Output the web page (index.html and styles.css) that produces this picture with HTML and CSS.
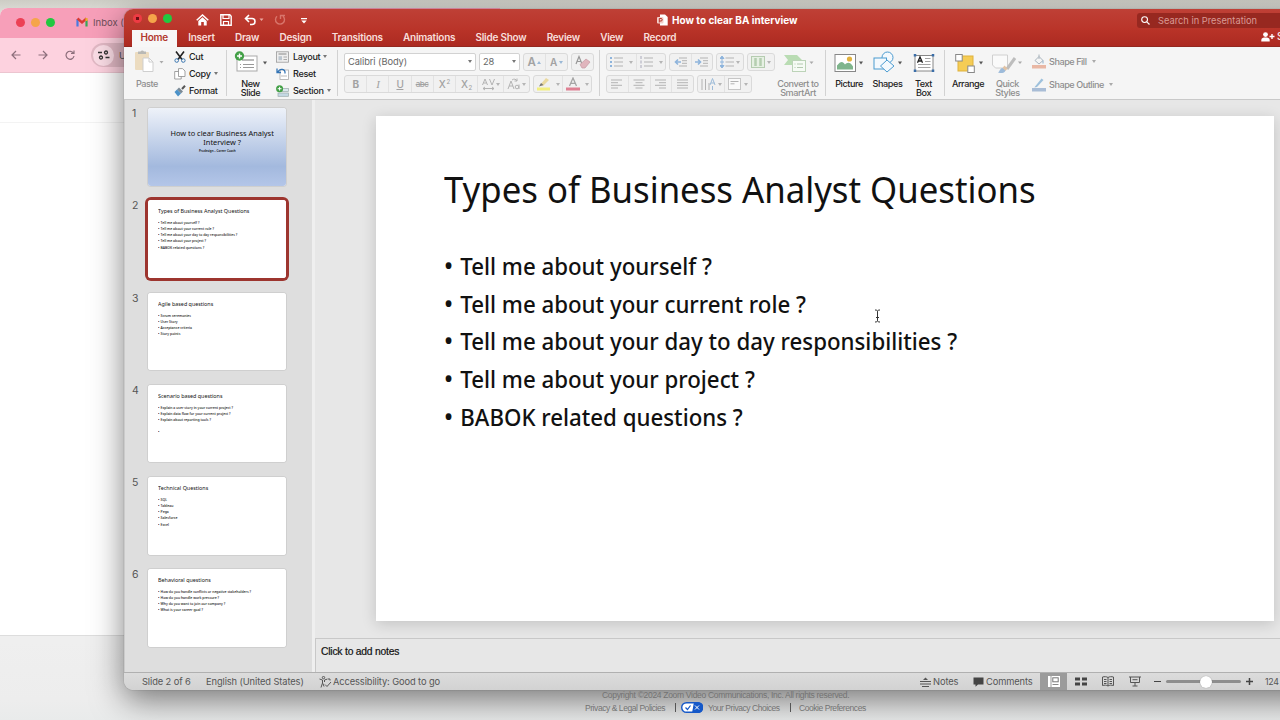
FILE: index.html
```html
<!DOCTYPE html>
<html lang="en">
<head>
    <meta charset="UTF-8">
    <meta name="viewport" content="width=device-width, initial-scale=1.0">
    <title>How to clear BA interview</title>
    <link rel="stylesheet" href="styles.css">
</head>
<body>
<div class="desktop">

  <!-- Zoom page footer -->
  <div class="zoom-footer">
    <p>Copyright ©2024 Zoom Video Communications, Inc. All rights reserved.</p>
    <div class="zoom-links">
      <span class="zl1">Privacy &amp; Legal Policies</span><i class="bar"></i>
      <svg width="22" height="11" viewBox="0 0 22 11"><rect x=".7" y=".7" width="20.6" height="9.6" rx="4.8" fill="#fff" stroke="#1558c8" stroke-width="1.4"/><path d="M13 0h4a5.500 5.500 0 0 1 0 11h-6z" fill="#1558c8"/><path d="M4.500 5.500l2 2 3-4" fill="none" stroke="#1558c8" stroke-width="1.200"/><path d="M14 3.500l4 4m0-4l-4 4" stroke="#fff"/></svg>
      <span class="zl2">Your Privacy Choices</span><i class="bar"></i>
      <span class="zl3">Cookie Preferences</span>
    </div>
  </div>

  <!-- Browser window -->
  <div class="browser">
    <div class="browser-tabs">
      <i class="dot red"></i><i class="dot yellow"></i><i class="dot green"></i>
      <svg class="gmail" width="12" height="10" viewBox="0 0 12 10"><path d="M1.500 9.500V2" stroke="#4a7be0" stroke-width="2.200"/><path d="M10.500 9.500V3" stroke="#3aa757" stroke-width="2.200"/><path d="M1.500 1.500L6 5.500l4.500-4" fill="none" stroke="#d93a35" stroke-width="2.400"/><path d="M10.500 4V1" stroke="#e8b030" stroke-width="2.200"/></svg>
      <span>Inbox (</span>
    </div>
    <div class="browser-bar">
      <svg width="10" height="10" viewBox="0 0 10 10" class="nav"><path d="M9.500 5H1M5 1L1 5l4 4"/></svg>
      <svg width="10" height="10" viewBox="0 0 10 10" class="nav"><path d="M.5 5H9M5 1l4 4-4 4"/></svg>
      <svg width="10" height="10" viewBox="0 0 10 10" class="nav"><path d="M8.500 3.200A4 4 0 1 0 9 6M9 .5v3H6"/></svg>
      <div class="url"><b><svg width="12" height="10" viewBox="0 0 12 10" class="tune"><path d="M0 2.500h4M7.500 7.500h4"/><circle cx="8" cy="2.500" r="1.500"/><circle cx="3" cy="7.500" r="1.500"/></svg></b><span>U</span></div>
    </div>
    <div class="browser-page"><div class="page-head"></div></div>
  </div>

  <!-- PowerPoint window -->
  <div class="ppt">
    <header class="titlebar">
      <div class="quick">
        <i class="dot red close"></i><i class="dot yellow"></i><i class="dot green"></i>
        <svg class="q-home" width="13" height="12" viewBox="0 0 13 12"><path d="M.7 6.300L6.500 1l5.800 5.300" fill="none" stroke="#fff" stroke-width="1.500"/><path d="M2.300 7L6.500 3.300 10.700 7v4.500H7.800V8H5.200v3.500H2.300z" fill="#fff"/></svg>
        <svg class="q-save" width="12" height="12" viewBox="0 0 12 12"><path d="M.8.8h9l1.400 1.400v9H.8z" fill="none" stroke="#fff" stroke-width="1.400"/><path d="M3 1v3.500h6V1M3.500 11V7.500h5V11" fill="none" stroke="#fff" stroke-width="1.200"/></svg>
        <svg class="q-undo" width="20" height="12" viewBox="0 0 20 12"><path d="M5 1L1.500 4.500 5 8M2 4.500h6a3 3 0 0 1 0 6H6" fill="none" stroke="#fff" stroke-width="1.600"/><path d="M15.500 4.500h4l-2 2.500z" fill="#eba8a0"/></svg>
        <svg class="q-redo" width="12" height="12" viewBox="0 0 12 12"><path d="M3 2.300a4.500 4.500 0 1 0 6 0M6.500 5V1.500H11" fill="none" stroke="#d8756b" stroke-width="1.400"/></svg>
        <svg class="q-more" width="6" height="6" viewBox="0 0 6 6"><path d="M0 .6h6" stroke="#fff" stroke-width="1.200"/><path d="M.3 2.500h5.400L3 5.500z" fill="#fff"/></svg>
      </div>
      <div class="doc-title">
        <svg width="11" height="12" viewBox="0 0 11 12"><path d="M3 .5h5L10.700 3v8.500H3z" fill="#fff"/><rect y="3" width="6.500" height="6.500" rx="1" fill="#f3d0cb"/><path d="M2.300 8.500v-4H4a1.200 1.200 0 0 1 0 2.500H2.500" stroke="#b7372c" fill="none"/></svg>
        <span>How to clear BA interview</span>
      </div>
      <div class="search">
        <svg width="9" height="9" viewBox="0 0 9 9"><circle cx="3.600" cy="3.600" r="2.900" fill="none" stroke="#fff" stroke-width="1.100"/><path d="M5.800 5.800L8.500 8.500" stroke="#fff" stroke-width="1.200"/></svg>
        <span>Search in Presentation</span>
      </div>
    </header>
    <nav class="tabs">
      <span class="tab active">Home</span><span class="tab">Insert</span><span class="tab">Draw</span><span class="tab">Design</span><span class="tab">Transitions</span><span class="tab">Animations</span><span class="tab">Slide Show</span><span class="tab">Review</span><span class="tab">View</span><span class="tab">Record</span>
      <div class="share"><svg width="14" height="10" viewBox="0 0 14 10"><circle cx="4.500" cy="2.600" r="2.400" fill="#fff"/><path d="M.3 9.500V8c0-2 2-2.500 4.200-2.500S8.700 6 8.700 8v1.500z" fill="#fff"/><path d="M8.500 4.500h5M11 2v5" stroke="#fff" stroke-width="1.400"/></svg><span>Share</span></div>
    </nav>

    <div class="ribbon">
      <div class="big off w-paste">
        <svg width="30" height="26" viewBox="0 0 30 26"><rect x="1" y="5" width="14" height="18" rx="1" fill="#ecdcc0"/><path d="M4 7V4.500h2.500a2 2 0 0 1 3.500 0H12V7z" fill="#b9b9b5"/><path d="M9 11h6l4 4v9.500H9z" fill="#fff" stroke="#cfcfcf"/><path d="M15 11v4h4" fill="none" stroke="#cfcfcf"/><path d="M25.500 14h4l-2 2.500z" fill="#aaa"/></svg>
        <span>Paste</span>
      </div>
      <div class="stack w-clip">
        <div><svg width="12" height="12" viewBox="0 0 12 12"><path d="M2 .5l6 8M10 .5l-6 8" stroke="#222" stroke-width="1.600"/><circle cx="2.700" cy="9.500" r="1.800" fill="none" stroke="#3c77b0"/><circle cx="9.300" cy="9.500" r="1.800" fill="none" stroke="#3c77b0"/></svg><span>Cut</span></div>
        <div><svg width="12" height="12" viewBox="0 0 12 12"><path d="M.7 3.500h5l1.500 1.500v6H.7z" fill="#fff" stroke="#8b8b8b" stroke-width=".8"/><path d="M4.500.6h4L11 3v5.500H4.500z" fill="#fff" stroke="#8b8b8b" stroke-width=".8"/></svg><span>Copy</span><em class="caret cc"></em></div>
        <div><svg width="12" height="12" viewBox="0 0 12 12"><path d="M11 .8L8 4" stroke="#555" stroke-width="2"/><path d="M5 2.500l4 4-2 2-4-4z" fill="#7c8b96"/><path d="M3 4.500l4 4-3 3L.5 7z" fill="#4c92c8"/></svg><span>Format</span></div>
      </div>
      <i class="sep"></i>
      <div class="big w-new">
        <svg width="34" height="26" viewBox="0 0 34 26"><rect x="3" y="9" width="20" height="15" fill="#fff" stroke="#a9a9a9"/><path d="M8 13h12" stroke="#bbb" stroke-width="2"/><path d="M6 17.500h1m2 0h11M6 20.500h1m2 0h11" stroke="#999"/><circle cx="5.500" cy="9" r="4.700" fill="#43a047"/><path d="M3 9h5M5.500 6.500v5" stroke="#fff" stroke-width="1.400"/><path d="M29 14.500h4l-2 3z" fill="#555"/></svg>
        <span>New<br>Slide</span>
      </div>
      <div class="stack w-lay">
        <div><svg width="13" height="12" viewBox="0 0 13 12"><rect x=".5" y=".8" width="12" height="10.400" fill="#eee" stroke="#9a9a9a" stroke-width=".8"/><path d="M2.500 3h8" stroke="#888"/><rect x="2.500" y="5.200" width="3.500" height="4" fill="#bcc6cf"/><path d="M7.500 6h3.500M7.500 8.500h3.500" stroke="#999" stroke-width=".8"/></svg><span>Layout</span><em class="caret cl"></em></div>
        <div><svg width="13" height="12" viewBox="0 0 13 12"><rect x="4" y="2" width="8.500" height="9.500" fill="#fff" stroke="#aaa" stroke-width=".8"/><path d="M1 .5v4h4M1.500 4.500C4-.5 9.500 1 9 5.500" fill="none" stroke="#3374b5" stroke-width="1.300"/><path d="M5 8h6" stroke="#bbb"/></svg><span>Reset</span></div>
        <div><svg width="13" height="12" viewBox="0 0 13 12"><rect x="3" y="3.500" width="9.500" height="3" fill="#dbe8ee" stroke="#9aa" stroke-width=".7"/><rect x="2" y="8" width="10.500" height="3.300" fill="#c5d9e4" stroke="#9aa" stroke-width=".7"/><circle cx="3.600" cy="3.700" r="3.500" fill="#43a047"/><path d="M1.700 3.700h3.800M3.600 1.800v3.800" stroke="#fff"/></svg><span>Section</span><em class="caret cs"></em></div>
      </div>
      <i class="sep"></i>

      <div class="rows w-font">
        <div class="row">
          <div class="combo c1"><span>Calibri (Body)</span><em class="caret"></em></div>
          <div class="combo c2"><span>28</span><em class="caret"></em></div>
          <div class="btns ab"><b class="fa">A<em class="up"></em></b><b class="fb">A<em class="caret blue"></em></b></div>
          <div class="btns er"><b><svg width="16" height="14" viewBox="0 0 16 14"><path d="M1 9L4 1.500 7 9M2 6.500h4" fill="none" stroke="#999" stroke-width="1.200"/><path d="M5 9.500L11 4l4 3-5 6H7z" fill="#e0b5bd" stroke="#c59aa3" stroke-width=".7"/></svg></b></div>
        </div>
        <div class="row">
          <div class="btns fmt"><b class="heavy">B</b><b class="ital">I</b><b class="und">U</b><b class="strike">abc</b><b>X<sup>2</sup></b><b>X<sub>2</sub></b><b class="wide av"><svg width="13" height="13" viewBox="0 0 13 13"><path d="M.5 7L3 1l2.500 6M1.500 5h3M7.500 1L10 7l2.500-6M1 10.500h11M3 9l-2 1.500L3 12M10 9l2 1.500-2 1.500" class="g"/></svg><em class="caret"></em></b><b class="wide"><svg width="14" height="12" viewBox="0 0 14 12"><path d="M1 11l3-8 3 8M2 8h4" class="g"/><circle cx="10" cy="9" r="1.800" class="g"/><path d="M12 6.500V11M5 2c2-1.500 4-1 5 1M10 .5V3H7.500" class="g"/></svg><em class="caret"></em></b></div>
          <div class="btns hl"><b><svg width="14" height="14" viewBox="0 0 14 14"><rect x="0" y="10.500" width="13" height="3" fill="#f3ef7f"/><path d="M3 8l6-7 3 2-6 6z" fill="#ead9a0"/><path d="M2 9.500L4 6l2.500 2z" fill="#777"/></svg></b><b class="sm"><em class="caret"></em></b><b><svg width="14" height="14" viewBox="0 0 14 14"><path d="M3.500 9L7 1l3.500 8M4.600 6.300h4.800" fill="none" stroke="#a5a5a5" stroke-width="1.300"/><rect x="0" y="10.500" width="14" height="3" fill="#df8093"/></svg></b><b class="sm"><em class="caret"></em></b></div>
        </div>
      </div>
      <i class="sep"></i>

      <div class="rows w-para">
        <div class="row">
          <div class="btns p1"><b><svg width="13" height="12" viewBox="0 0 13 12"><path d="M0 2h2M0 6h2M0 10h2" stroke="#8eb4dc" stroke-width="2"/><path d="M4 2h9M4 6h9M4 10h9" class="g"/></svg></b><b class="sm"><em class="caret"></em></b><b><svg width="13" height="12" viewBox="0 0 13 12"><path d="M1 0v3M1 4.500v3M1 9v3" stroke="#aab" /><path d="M4 2h9M4 6h9M4 10h9" class="g"/></svg></b><b class="sm"><em class="caret"></em></b></div>
          <div class="btns p2"><b><svg width="13" height="10" viewBox="0 0 13 10"><path d="M5 1h8M8 3.700h5M8 6.300h5M5 9h8" class="g"/><path d="M7 5H1.500M4 2.500L1.500 5 4 7.500" fill="none" stroke="#8eb4dc" stroke-width="1.600"/></svg></b><b><svg width="13" height="10" viewBox="0 0 13 10"><path d="M5 1h8M8 3.700h5M8 6.300h5M5 9h8" class="g"/><path d="M0 5h5.500M3 2.500L5.500 5 3 7.500" fill="none" stroke="#8eb4dc" stroke-width="1.600"/></svg></b></div>
          <div class="btns p3"><b><svg width="14" height="12" viewBox="0 0 14 12"><path d="M5.500 2H14M5.500 6H14M5.500 10H14" class="g"/><path d="M2 0l2 2.500H0zM2 12l2-2.500H0zM2 2v8M0 6h4" fill="#8eb4dc" stroke="#8eb4dc"/></svg><em class="caret"></em></b></div>
          <div class="btns p3"><b><svg width="14" height="12" viewBox="0 0 14 12"><rect x=".5" y=".5" width="13" height="11" fill="#e6f0e3" stroke="#b5ccb0"/><path d="M4.500 2v8M9.500 2v8" stroke="#b5ceb0" stroke-width="2.500"/></svg><em class="caret"></em></b></div>
        </div>
        <div class="row">
          <div class="btns p4"><b><svg width="12" height="10" viewBox="0 0 12 10"><path d="M0 1h11M0 3.700h7M0 6.300h11M0 9h7" class="g"/></svg></b><b><svg width="12" height="10" viewBox="0 0 12 10"><path d="M.5 1h11M2.500 3.700h7M.5 6.300h11M2.500 9h7" class="g"/></svg></b><b><svg width="12" height="10" viewBox="0 0 12 10"><path d="M0 1h11M4 3.700h7M0 6.300h11M4 9h7" class="g"/></svg></b><b><svg width="12" height="10" viewBox="0 0 12 10"><path d="M0 1h11M0 3.700h11M0 6.300h11M0 9h11" class="g"/></svg></b></div>
          <div class="btns p5"><b><svg width="15" height="13" viewBox="0 0 15 13"><path d="M1 1v11M4.500 1v11M8 5v7" class="g"/><path d="M9 7l2.500-6.500L14 7M10 5h3.500M11.500 8v4" fill="none" stroke="#9dbbd8"/></svg><em class="caret"></em></b><b><svg width="14" height="12" viewBox="0 0 14 12"><rect x=".5" y=".5" width="12" height="11" fill="#fafafa" stroke="#c6c6c6"/><path d="M2.500 3.500h8M2.500 5.800h4" class="g"/></svg><em class="caret"></em></b></div>
        </div>
      </div>
      <div class="big off w-smart">
        <svg width="30" height="26" viewBox="0 0 30 26"><path d="M0 8h13l5 5-5 5H0l4-5z" fill="#b9dcb3"/><rect x="8.500" y="13.500" width="13" height="11" fill="#f6fbf5" stroke="#bcd3b8"/><path d="M10.500 17h1m1.500 0h6M10.500 20.500h1m1.500 0h6" stroke="#b4c9b0"/><path d="M25.500 14.500h4l-2 2.500z" fill="#aaa"/></svg>
        <span>Convert to<br>SmartArt</span>
      </div>
      <i class="sep"></i>
      <div class="big w-pic">
        <svg width="30" height="26" viewBox="0 0 30 26"><rect x="2" y="7.500" width="20.500" height="17" fill="#fff" stroke="#888"/><path d="M4 22.500v-4c4-5 6-4 8-1 2-2 5-3 8 2v3z" fill="#7fb58c"/><circle cx="16.500" cy="12" r="2.600" fill="#e2b23e"/><path d="M26 14.500h4l-2 3z" fill="#555"/></svg>
        <span>Picture</span>
      </div>
      <div class="big w-shape">
        <svg width="30" height="26" viewBox="0 0 30 26"><circle cx="15.500" cy="10.500" r="5.500" fill="#f4f9fd" stroke="#4b9bd0"/><rect x="2" y="11" width="12.500" height="11" fill="#f4f9fd" stroke="#4b9bd0"/><path d="M15 13l7 6-7 6-6.500-6z" fill="#f4f9fd" stroke="#4b9bd0"/><path d="M26 14.500h4l-2 3z" fill="#555"/></svg>
        <span>Shapes</span>
      </div>
      <div class="big w-text">
        <svg width="22" height="26" viewBox="0 0 22 26"><rect x="2" y="8.500" width="18" height="15.500" fill="#fff" stroke="#888"/><path d="M12 11.500h5.500M12 14.500h5.500M5 17.500h12.500M5 20.500h12.500" stroke="#999" stroke-width=".9"/><path d="M4.500 15.800L7 10l2.500 5.800M5.500 14h3" fill="none" stroke="#222" stroke-width="1.300"/><path d="M2 7v2.500M20 7v2.500M2 22.500V25M20 22.500V25" stroke="#3b6ea8" stroke-width="2.500"/></svg>
        <span>Text<br>Box</span>
      </div>
      <i class="sep"></i>
      <div class="big w-arr">
        <svg width="30" height="26" viewBox="0 0 30 26"><rect x="3" y="9" width="15" height="15" fill="#f5cc55" stroke="#dfb23c"/><rect x=".7" y="7.500" width="6.500" height="6.500" fill="#fff" stroke="#888"/><rect x="12.800" y="19" width="6.500" height="6.500" fill="#fff" stroke="#888"/><path d="M24 14.500h4l-2 3z" fill="#555"/></svg>
        <span>Arrange</span>
      </div>
      <div class="big off w-sty">
        <svg width="32" height="26" viewBox="0 0 32 26"><path d="M1.500 8h15v13h-12l-3-3z" fill="#fafafa" stroke="#d0d0d0"/><path d="M24 11l-8 11" stroke="#bdbdbd" stroke-width="3"/><path d="M13.500 18.500l3 3-2 2.500-3-3z" fill="#e2c3a4"/><path d="M7 25.500c2-1 1.500-4 4.500-4.500l3 2.500c-1 3-5 3-7.500 2z" fill="#9dbbda"/><path d="M27 14.500h4l-2 2.500z" fill="#aaa"/></svg>
        <span>Quick<br>Styles</span>
      </div>
      <div class="stack fill off">
        <div><svg width="14" height="15" viewBox="0 0 14 15"><rect y="11" width="14" height="3.500" fill="#e9b7a4"/><path d="M7 2.500l4 4-4 3.500-4-3.500zM7 5V.5" fill="#f5f5f5" stroke="#a9b4bd"/><path d="M11 6.500v3" stroke="#8fb0cc"/></svg><span>Shape Fill</span><em class="caret cf"></em></div>
        <div><svg width="14" height="15" viewBox="0 0 14 15"><rect y="11" width="14" height="3.500" fill="#a9bdd6"/><path d="M3 9.500L9.500 1.500l2 1.500L5 10l-2.500.5z" fill="#9ec1dc"/></svg><span>Shape Outline</span><em class="caret cf"></em></div>
      </div>
    </div>

    <div class="body">
      <aside class="thumbs">
        <div class="thumb"><span class="num">1</span><div class="frame"><div class="slide cover"><h1>How to clear Business Analyst<br>Interview ?</h1><p>Prodesign – Career Coach</p></div></div></div>
        <div class="thumb current"><span class="num">2</span><div class="frame"><div class="slide"><h1>Types of Business Analyst Questions</h1><ul><li>Tell me about yourself ?</li><li>Tell me about your current role ?</li><li>Tell me about your day to day responsibilities ?</li><li>Tell me about your project ?</li><li>BABOK related questions ?</li></ul></div></div></div>
        <div class="thumb"><span class="num">3</span><div class="frame"><div class="slide"><h1>Agile based questions</h1><ul><li>Scrum ceremonies</li><li>User Story</li><li>Acceptance criteria</li><li>Story points</li></ul></div></div></div>
        <div class="thumb"><span class="num">4</span><div class="frame"><div class="slide"><h1>Scenario based questions</h1><ul><li>Explain a user story in your current project ?</li><li>Explain data flow for your current project ?</li><li>Explain about reporting tools ?</li><li class="last"></li></ul></div></div></div>
        <div class="thumb"><span class="num">5</span><div class="frame"><div class="slide"><h1>Technical Questions</h1><ul><li>SQL</li><li>Tableau</li><li>Pega</li><li>Salesforce</li><li>Excel</li></ul></div></div></div>
        <div class="thumb"><span class="num">6</span><div class="frame"><div class="slide"><h1>Behavioral questions</h1><ul><li>How do you handle conflicts or negative stakeholders ?</li><li>How do you handle work pressure ?</li><li>Why do you want to join our company ?</li><li>What is your career goal ?</li></ul></div></div></div>
      </aside>
      <main class="editor">
        <div class="canvas">
          <div class="slide main">
            <h1>Types of Business Analyst Questions</h1>
            <ul>
              <li>Tell me about yourself ?</li>
              <li>Tell me about your current role ?</li>
              <li>Tell me about your day to day responsibilities ?</li>
              <li>Tell me about your project ?</li>
              <li>BABOK related questions ?</li>
            </ul>
            <svg class="cursor" width="7" height="14" viewBox="0 0 7 14"><path d="M1 1c1.500 0 2.500.3 2.500 1.500v9C3.500 12.700 2.500 13 1 13M6 1c-1.500 0-2.500.3-2.500 1.500M6 13c-1.500 0-2.500-.3-2.500-1.500M2 8.500h3" fill="none" stroke="#333"/></svg>
          </div>
        </div>
        <div class="notes">Click to add notes</div>
      </main>
    </div>

    <footer class="status">
      <span class="s-count">Slide 2 of 6</span>
      <span class="s-lang">English (United States)</span>
      <svg class="s-acc" width="13" height="12" viewBox="0 0 13 12"><circle cx="4.500" cy="1.600" r="1.200" class="k"/><path d="M.5 3l3 1v3L2 11.500M8.500 3l-3 1v2M4 7.500l1 3M6 8.500l2 2 4-4.500M9 3h2v1.500" class="k"/></svg>
      <span class="s-good">Accessibility: Good to go</span>
      <svg class="s-nicon" width="11" height="10" viewBox="0 0 11 10"><path d="M0 4.500h11M0 7h11M2 9.500h7" class="k"/><path d="M3 3L5.500.5 8 3z" fill="#555"/></svg>
      <span class="s-notes">Notes</span>
      <svg class="s-cicon" width="11" height="10" viewBox="0 0 11 10"><path d="M.5.500h10v7H5L2.500 9.800V7.500h-2z" fill="#444"/></svg>
      <span class="s-comm">Comments</span>
      <div class="view on"><svg width="12" height="11" viewBox="0 0 12 11"><rect width="12" height="11" fill="#fff"/><path d="M3 0v11" stroke="#999"/><rect x="4.800" y="1.800" width="5.400" height="4" fill="none" stroke="#777"/><path d="M4.500 8.500h6" stroke="#888"/></svg></div>
      <div class="view"><svg width="12" height="9" viewBox="0 0 12 9"><path d="M0 2h5M7 2h5M0 7h5M7 7h5" stroke="#444" stroke-width="3.200"/></svg></div>
      <div class="view"><svg width="12" height="11" viewBox="0 0 12 11"><path d="M6 1.500C4.500.5 2.500.5.500 1v8.500c2-.5 4-.5 5.500.5 1.500-1 3.500-1 5.500-.5V1C9.500.5 7.500.5 6 1.500zV10M2 3.500h2.500M2 5.500h2.500M2 7.500h2.500M7.500 3.500H10M7.500 5.500H10M7.500 7.500H10" class="k"/></svg></div>
      <div class="view"><svg width="12" height="11" viewBox="0 0 12 11"><path d="M0 1h12M1.500 1v5.500h9V1M6 6.500V10M3.500 10h5M3.500 3.700h5" class="k"/></svg></div>
      <div class="zoom"><i class="minus"></i><div class="track"><i class="knob"></i></div><svg width="7" height="7" viewBox="0 0 7 7"><path d="M0 3.500h7M3.500 0v7" stroke="#444" stroke-width="1.500"/></svg><span>124</span></div>
    </footer>
  </div>
</div>
</body>
</html>
```
FILE: styles.css
```css
* { box-sizing: border-box; }

body {
  margin: 0;
  overflow: hidden;
  font-family: Inter, "Liberation Sans", sans-serif;
}

h1, ul, p { margin: 0; padding: 0; }
svg { display: block; flex: none; }
em, i, b { font-style: normal; font-weight: inherit; }

.desktop {
  position: relative;
  width: 1280px;
  height: 720px;
  overflow: hidden;
  background: linear-gradient(#cdcdc5 0, #dcdcd6 12px, #efefef 40px, #efefef 640px, #ededed 700px, #e9ebeb 720px);
}

/* zoom footer */
.zoom-footer {
  position: absolute;
  left: 585px;
  top: 689px;
  width: 300px;
  z-index: 3;
  font-family: "Liberation Sans", sans-serif;
  font-size: 8.5px;
  line-height: 12px;
  color: #737373;
  white-space: nowrap;
}
.zoom-footer p { padding-left: 17px; letter-spacing: -.31px; }
.zoom-links { display: flex; align-items: center; height: 13px; letter-spacing: -.44px; }
.zoom-links .bar { width: 1px; height: 9px; background: #555; flex: none; }
.zl1 { width: 90px; }
.zoom-links svg { margin-left: 5px; margin-right: 5px; }
.zl2 { width: 82px; }
.zl3 { margin-left: 8px; }

/* browser */
.browser {
  position: absolute;
  left: 0;
  top: 8px;
  width: 500px;
  height: 628px;
  background: #fff;
  border-bottom: 1px solid #ddd;
  border-radius: 8px 0 0 0;
  overflow: hidden;
}
.browser-tabs {
  display: flex;
  align-items: center;
  height: 30px;
  padding: 0 0 2px 16px;
  gap: 6px;
  background: #f79fb9;
  font-size: 9.5px;
  color: #6b4f5a;
}
.browser-tabs span { margin-left: -1px; }
.dot { width: 9px; height: 9px; border-radius: 50%; flex: none; }
.red { background: #ec4055; }
.yellow { background: #f5a54a; }
.green { background: #22c840; }
.gmail { margin-left: 15px; }
.browser-bar {
  display: flex;
  align-items: center;
  height: 35px;
  padding-left: 11px;
  gap: 17px;
  background: #fdd2df;
  border-bottom: 1px solid #ecc5d0;
}
.nav { fill: none; stroke: #8d6f7c; stroke-width: 1.2; }
.url {
  display: flex;
  align-items: center;
  gap: 5px;
  width: 300px;
  height: 24px;
  margin-left: -1px;
  padding-left: 2px;
  border-radius: 12px;
  background: #e2b9c5;
  font-size: 9.5px;
  color: #555;
}
.url b {
  display: flex;
  align-items: center;
  justify-content: center;
  width: 21px;
  height: 21px;
  border-radius: 50%;
  background: #fbdde6;
}
.tune { fill: none; stroke: #333; stroke-width: 1.3; }
.page-head { height: 50px; border-bottom: 1px solid #f3f3f3; }

/* powerpoint window */
.ppt {
  position: absolute;
  left: 124px;
  top: 9px;
  width: 1200px;
  height: 681px;
  display: flex;
  flex-direction: column;
  border-radius: 9px;
  overflow: hidden;
  background: #e7e7e7;
  box-shadow: 0 0 1px rgba(0,0,0,.5), 0 10px 32px rgba(0,0,0,.5);
}
.titlebar {
  display: flex;
  align-items: center;
  height: 21px;
  background: linear-gradient(#bf4036, #b93429);
}
.quick { display: flex; align-items: center; width: 533px; padding-left: 9px; }
.quick .dot { margin-right: 6px; margin-bottom: 2px; }
.quick .close { background: radial-gradient(#6d0f14 0 1.5px, #ee3b43 2px); }
.q-home { margin-left: 18px; }
.q-save { margin-left: 11px; }
.q-undo { margin-left: 12px; }
.q-redo { margin-left: 10px; }
.q-more { margin-left: 15px; margin-top: 2px; }
.doc-title {
  display: flex;
  align-items: center;
  gap: 4px;
  width: 480px;
  color: #fff;
  font-size: 10px;
  font-weight: 700;
}
.search {
  display: flex;
  align-items: center;
  gap: 8px;
  width: 180px;
  height: 15px;
  margin-top: 1px;
  padding-left: 4px;
  border-radius: 3px;
  background: #972820;
  color: #d99a94;
  font-size: 9.3px;
}
.tabs {
  display: flex;
  height: 17px;
  gap: 20.2px;
  padding-left: 8px;
  background: linear-gradient(#b83328, #ac2a21);
  border-bottom: 1px solid #932820;
  color: #f8dedb;
  font-size: 10px;
  letter-spacing: -.24px;
  font-weight: 600;
  line-height: 15px;
  white-space: nowrap;
}
.tab.active {
  margin-right: -8.5px;
  padding: 0 8.5px;
  height: 17px;
  background: #f7f7f7;
  color: #b2392e;
}
.share { display: flex; gap: 2px; width: 63px; margin: -1px 0 0 auto; align-items: center; height: 15px; }

/* ribbon */
.ribbon {
  display: flex;
  height: 53px;
  background: #f5f5f5;
  border-bottom: 1px solid #c9c9c9;
  font-size: 9.1px;
  font-weight: 500;
  line-height: 9px;
  color: #222;
  letter-spacing: -.42px;
  white-space: nowrap;
}
.sep { width: 1px; height: 46px; margin-top: 3px; background: #d2d2d2; flex: none; }
.off { color: #8e8e8e; }
.big { flex: none; text-align: center; }
.big svg { margin: 0 auto 6px; }
.big span { display: block; }
.w-paste { width: 46px; }
.w-paste svg { margin-left: 10px; }
.w-clip { width: 56px; padding-left: 4px; }
.w-new { width: 49px; }
.w-new svg { margin-left: 7px; }
.w-new span { margin-left: -2px; }
.w-lay { width: 61px; }
.stack { display: flex; flex-direction: column; flex: none; padding-top: 1px; letter-spacing: -.32px; }
.stack div { display: flex; align-items: center; height: 17.3px; gap: 4px; }
.w-clip div { gap: 3px; }
.caret {
  flex: none;
  width: 0;
  height: 0;
  border: 2px solid transparent;
  border-top: 3px solid #777;
  border-bottom: 0;
}
.cl, .cs { margin-left: -1px; }
.cf { margin-left: 1px; }
.off .caret { border-top-color: #aaa; }
.rows { display: flex; flex-direction: column; gap: 4px; padding: 6px 0 0 6px; flex: none; }
.row { display: flex; height: 18px; gap: 3px; }
.w-font { width: 261px; }
.w-para { width: 179px; }
.combo {
  display: flex;
  align-items: center;
  justify-content: space-between;
  padding: 0 3px 1px;
  background: #fff;
  border: 1px solid #d2d2d2;
  border-radius: 2px;
  font-size: 9.3px;
  font-weight: 400;
  color: #666;
  letter-spacing: -.08px;
}
.c1 { width: 132px; }
.c2 { width: 41px; }
.btns {
  display: flex;
  background: #f1f1f1;
  border: 1px solid #dadada;
  border-radius: 3px;
  color: #a2a2a2;
}
.btns b {
  display: flex;
  flex: 1;
  align-items: center;
  justify-content: center;
  gap: 2px;
  font-size: 10px;
  border-left: 1px solid #e2e2e2;
}
.btns b:first-child { border-left: 0; }
.btns .sm { flex: 0 0 9px; border-left: 0; }
.btns .caret { border-top-color: #b5b5b5; }
.ab { width: 45px; }
.btns .fa { font-size: 11.5px; font-weight: 600; }
.btns .fb { font-size: 10px; font-weight: 600; }
.btns .blue { border-top-color: #9ab8d6; }
.up { border: 2.5px solid transparent; border-bottom: 3px solid #9ab8d6; border-top: 0; }
.er { width: 23px; }
.fmt { width: 186px; }
.fmt .wide { flex: 0 0 26px; }
.btns .heavy { font-weight: 700; }
.btns .ital { font-family: "Liberation Serif", serif; font-style: italic; font-size: 11px; }
.und { text-decoration: underline; }
.btns .strike { text-decoration: line-through; font-size: 8px; }
sup, sub { font-size: 6px; line-height: 0; }
.fmt b { gap: 1px; }
.fmt sup { align-self: flex-start; margin-top: 6px; }
.fmt sub { align-self: flex-end; margin-bottom: 4px; }
.hl { width: 59px; }
.g { fill: none; stroke: #b3b3b3; stroke-width: 1; }
.p1 { width: 60px; }
.p2 { width: 44px; }
.p3 { width: 28px; }
.p4 { width: 88px; }
.p5 { width: 55px; }
.w-smart { width: 46px; }
.w-smart span { margin-left: -8px; }
.w-smart svg { margin-left: 5px; }
.w-pic { width: 46px; }
.w-pic svg { margin-left: 7px; }
.w-shape { width: 31px; }
.w-shape svg { margin-left: 0; }
.w-text { width: 41px; }
.w-arr { width: 46px; }
.w-arr svg { margin-left: 10px; }
.w-sty { width: 33px; }
.w-sty svg { margin-left: 0; }
.fill { padding: 5px 0 0 8px; gap: 3px; letter-spacing: -.46px; }
.fill div { height: 19.5px; }
.fill span { margin-left: -1px; }

/* slides */
.body { display: flex; height: 572px; }
.thumbs {
  width: 191px;
  padding: 8px 0 0 7px;
  background: #dedede;
  border-left: 1px solid #cbcbcb;
  border-right: 3px solid #efefef;
  flex: none;
}
.thumb { display: flex; height: 92.3px; }
.num { width: 15.5px; font-size: 10.5px; line-height: 12px; color: #555; }
.frame {
  width: 138px;
  height: 77.5px;
  overflow: hidden;
  background: #fff;
  border-radius: 3px;
  box-shadow: 0 0 0 1px #cfcfcf;
}
.current .frame { box-shadow: 0 0 0 3px #9d352f; }

.slide {
  width: 898px;
  height: 505px;
  padding: 46px 0 0 68px;
  background: #fff;
  font-family: "Noto Sans", "Open Sans", sans-serif;
  color: #111;
  white-space: nowrap;
}
.slide h1 {
  width: max-content;
  font-size: 37px;
  font-weight: 400;
  line-height: 54px;
  transform: scaleX(.939);
  transform-origin: 0 50%;
}
.slide ul {
  width: max-content;
  margin-top: 31px;
  list-style: none;
  font-size: 24px;
  font-weight: 500;
  line-height: 37.7px;
  transform: scaleX(.928);
  transform-origin: 0 50%;
}
.slide li::before { content: "•"; display: inline-block; width: 17.5px; font-size: 26px; line-height: 0; }

/* thumbnails reuse the slide at a small scale */
.frame .slide { padding: 42px 0 0 65px; transform: scale(.1545); transform-origin: 0 0; }
.frame ul { margin-top: 29px; line-height: 40.4px; }
.frame .last { margin-top: 36px; }
.frame .cover {
  padding: 132px 0 0;
  text-align: center;
  background: linear-gradient(#eef2f9, #a3b9de 75%, #b4c6e8);
}
.cover h1 {
  width: auto;
  padding-left: 66px;
  font-size: 51px;
  line-height: 58px;
  transform-origin: 50% 50%;
}
.cover p { margin-top: 15px; font-size: 22px; font-weight: 600; transform: scaleX(.87); }

.editor { flex: 1; display: flex; flex-direction: column; }
.canvas { height: 538px; padding: 16px 0 0 61px; background: #e7e7e7; }
.main { position: relative; box-shadow: 0 3px 14px rgba(0,0,0,.16); }
.cursor { position: absolute; left: 498px; top: 193px; }
.notes {
  flex: 1;
  padding: 7px 0 0 5px;
  border-top: 1px solid #c8c8c8;
  border-left: 1px solid #c8c8c8;
  font-family: "Liberation Sans", sans-serif;
  font-size: 10.3px;
  letter-spacing: -.2px;
  line-height: 12px;
  color: #111;
  -webkit-text-stroke: .2px #111;
}

/* status bar */
.status {
  display: flex;
  align-items: center;
  height: 18px;
  padding-left: 18px;
  background: linear-gradient(#dcdcdc, #d2d2d2);
  border-top: 1px solid #b0b0b0;
  font-size: 9.3px;
  letter-spacing: -.1px;
  color: #555;
  white-space: nowrap;
}
.k { fill: none; stroke: #555; stroke-width: 1; }
.status span { flex: none; margin-top: -1px; }
.s-count { width: 64px; }
.s-lang { width: 113px; }
.s-acc { margin-right: 1px; }
.s-good { width: 587px; }
.s-nicon { margin-right: 2px; }
.s-notes { width: 40px; }
.s-cicon { margin-right: 2px; }
.s-comm { width: 54px; }
.view { display: flex; align-items: center; justify-content: center; width: 27px; height: 17px; flex: none; }
.view.on { background: #9b9b9b; }
.zoom { display: flex; align-items: center; margin-left: 6px; }
.minus { width: 7px; height: 1.5px; background: #444; }
.track { display: flex; align-items: center; width: 75px; height: 2.5px; margin: 0 5px; padding-left: 34px; border-radius: 2px; background: #8e8e8e; }
.knob { width: 12px; height: 12px; border-radius: 50%; background: #fff; box-shadow: 0 0 1px rgba(0,0,0,.4); flex: none; }
.status .zoom span { margin-left: 12px; font-size: 8.8px; letter-spacing: -.3px; }
```
